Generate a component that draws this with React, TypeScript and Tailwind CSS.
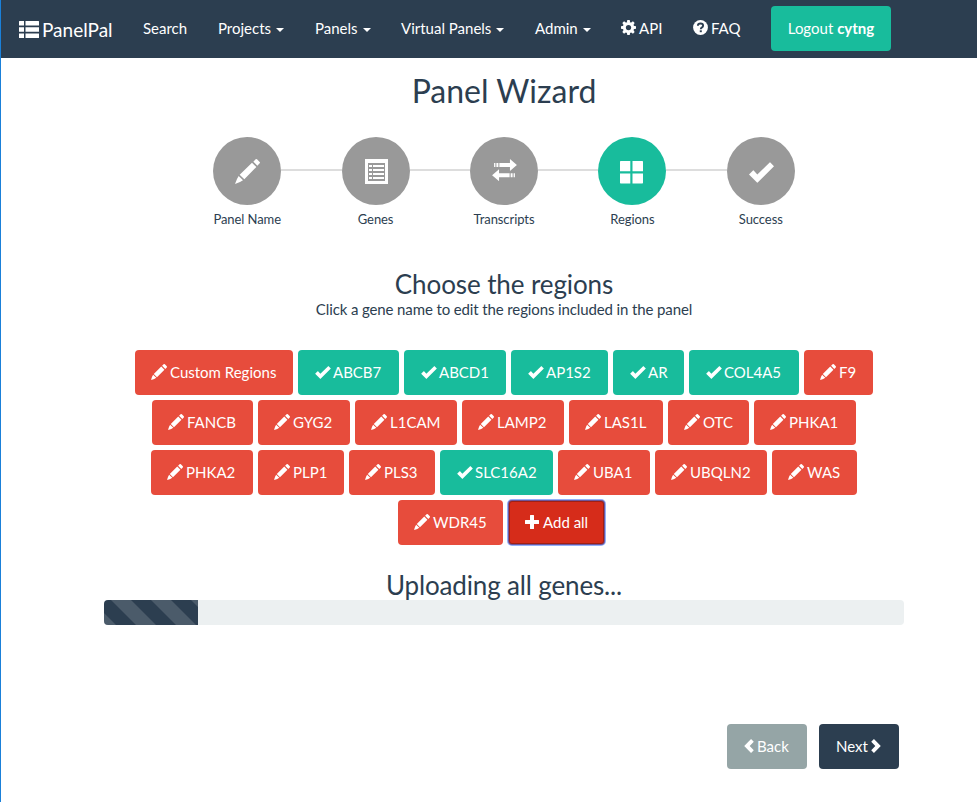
import React from "react";

type IconProps = { className?: string };

const Pencil = ({ className = "" }: IconProps) => (
  <svg viewBox="0 0 75 75" className={className} fill="currentColor">
    <path d="M55 8 62 1Q64 -1 66 1L74 9Q76 11 74 13L67 20ZM51 11 64 24 28 61 14 47ZM11 51 24 64 15 69 0 75 6 60Z" />
  </svg>
);

const SmallPencil = () => (
  <svg viewBox="0 0 75 75" className="mr-[3px] mb-0.5 -ml-px h-4 w-4 shrink-0" fill="currentColor">
    <path d="M52 8 59 1Q62 -1 65 1L74 10Q76 13 74 16L67 23ZM48 12 63 27 28 62 13 47ZM10 50 25 65 15 70 0 75 5 60Z" />
  </svg>
);

const Check = ({ className = "" }: IconProps) => (
  <svg viewBox="0 0 75 62" className={className} fill="currentColor">
    <path d="M0 37 12 25Q13 24 14 25L25 37 62 1Q63 0 64 1L75 12 26 61Q25 62 24 61Z" />
  </svg>
);

const ListBox = () => (
  <svg viewBox="0 0 23 25" className="ml-0.5 h-[25px] w-[23px]" shapeRendering="crispEdges">
    <path fill="#fff" d="M0 0h23v25H0z" />
    <path fill="#999" d="M3 4h17v18H3z" />
    <path fill="#fff" d="M4 6h3v2H4zM8 6h11v2H8zM4 10h3v2H4zM8 10h11v2H8zM4 14h3v2H4zM8 14h11v2H8zM4 18h3v2H4zM8 18h11v2H8z" />
  </svg>
);

const Transfer = () => (
  <svg viewBox="0 0 75 68" className="mb-0.5 h-[22.5px] w-[25px]" fill="currentColor">
    <path d="M6 12h4v12H6zM13 12h6v12h-6zM22 12h32V0L75 18 54 36V24H22zM69 43h-4v12h4zM62 43h-6v12h6zM53 43H21V31L0 49 21 67V55H53z" />
  </svg>
);

const Windows = () => (
  <svg viewBox="0 0 23 23" className="h-[23px] w-[23px]" fill="currentColor">
    <path d="M.7 0H10.3V10.3H0V.7Q0 0 .7 0ZM12.5 0H22.3Q23 0 23 .7V10.3H12.5ZM0 12.5H10.3V22.5H.7Q0 22.5 0 21.8ZM12.5 12.5H23V21.8Q23 22.5 22.3 22.5H12.5Z" />
  </svg>
);

const Brand = () => (
  <svg viewBox="0 0 20 17" className="h-[17px] w-5" fill="currentColor">
    <path d="M0 .5Q0 0 .5 0H5V4.5H0ZM6.5 0H19.5Q20 0 20 .5V4.5H6.5ZM0 6.2H5V10.8H0ZM6.5 6.2H20V10.8H6.5ZM0 12.5H5V17H.5Q0 17 0 16.500ZM6.500 12.500H20V16.500Q20 17 19.500 17H6.500Z" />
  </svg>
);

const Gear = () => (
  <svg viewBox="0 0 16 16" className="-mt-0.5 h-[15px] w-[15px]">
    <g fill="currentColor">
      <circle cx="8" cy="8" r="6" />
      <path d="M6.700 0h2.600l.5 3h-3.600zM6.700 16h2.600l.5-3h-3.600zM0 6.700v2.600l3 .5v-3.600zM16 6.700v2.600l-3 .5v-3.600z" />
      <path transform="rotate(45 8 8)" d="M6.700 0h2.600l.5 3h-3.600zM6.700 16h2.600l.5-3h-3.600zM0 6.700v2.600l3 .5v-3.600zM16 6.700v2.600l-3 .5v-3.600z" />
    </g>
    <circle cx="8" cy="8" r="2.800" fill="#2c3e50" />
  </svg>
);

const Question = () => (
  <svg viewBox="0 0 16 16" className="-mt-0.5 h-[15px] w-[15px]">
    <circle cx="8" cy="8" r="7.900" fill="currentColor" />
    <path d="M5.200 6.200Q5.200 3.700 8 3.700T10.800 6Q10.800 7.200 9.300 8.100 8.300 8.700 8.300 9.800" fill="none" stroke="#2c3e50" strokeWidth="2" />
    <path d="M7.200 11h2.200v2H7.200z" fill="#2c3e50" />
  </svg>
);

const Chevron = ({ className = "" }: IconProps) => (
  <svg viewBox="0 0 28 41" className={className} fill="currentColor">
    <path d="M20 0 28 8 16 20.500 28 33 20 41 0 20.500Z" />
  </svg>
);

const Plus = () => (
  <svg viewBox="0 0 14 14" className="mb-px h-[14px] w-[14px]" fill="currentColor">
    <path d="M5 .5Q5 0 5.500 0H8.500Q9 0 9 .5V5H13.500Q14 5 14 5.500V8.500Q14 9 13.500 9H9V13.500Q9 14 8.500 14H5.500Q5 14 5 13.500V9H.5Q0 9 0 8.500V5.500Q0 5 .5 5H5Z" />
  </svg>
);

const Caret = () => (
  <span className="ml-[5px] mt-[3px] border-x-4 border-t-4 border-x-transparent border-t-white" />
);

const steps = [
  { label: "Panel Name", icon: <Pencil className="h-[25px] w-[25px]" />, active: false },
  { label: "Genes", icon: <ListBox />, active: false },
  { label: "Transcripts", icon: <Transfer />, active: false },
  { label: "Regions", icon: <span className="mt-0.5 mr-px"><Windows /></span>, active: true },
  { label: "Success", icon: <span className="ml-px mt-0.5"><Check className="h-[21px] w-[25px]" /></span>, active: false },
];

type Gene = { name: string; w: number; done?: boolean };

const rows: Gene[][] = [
  [
    { name: "Custom Regions", w: 158 },
    { name: "ABCB7", w: 101, done: true },
    { name: "ABCD1", w: 102, done: true },
    { name: "AP1S2", w: 97, done: true },
    { name: "AR", w: 71, done: true },
    { name: "COL4A5", w: 110, done: true },
    { name: "F9", w: 69 },
  ],
  [
    { name: "FANCB", w: 101 },
    { name: "GYG2", w: 92 },
    { name: "L1CAM", w: 102 },
    { name: "LAMP2", w: 102 },
    { name: "LAS1L", w: 94 },
    { name: "OTC", w: 81 },
    { name: "PHKA1", w: 102 },
  ],
  [
    { name: "PHKA2", w: 102 },
    { name: "PLP1", w: 86 },
    { name: "PLS3", w: 86 },
    { name: "SLC16A2", w: 113, done: true },
    { name: "UBA1", w: 92 },
    { name: "UBQLN2", w: 112 },
    { name: "WAS", w: 85 },
  ],
  [{ name: "WDR45", w: 105 }],
];

const GeneButton = ({ name, w, done }: Gene) => (
  <button
    style={{ width: w }}
    className={`flex h-[45px] shrink-0 items-center whitespace-nowrap rounded pl-[17px] text-white ${done ? "bg-[#18bc9c]" : "bg-[#e74c3c]"}`}
  >
    {done ? (
      <Check className="mr-0.5 h-[13px] w-4 shrink-0" />
    ) : (
      <SmallPencil />
    )}
    {name}
  </button>
);

export default function App() {
  return (
    <div className="h-[802px] w-[977px] overflow-hidden border-l border-[#1a80d9] bg-white font-['Lato',sans-serif] text-[15px] leading-[21px] text-[#2c3e50]">
      <nav className="flex h-[58px] items-center whitespace-nowrap bg-[#2c3e50] pb-0.5 pl-[18px] text-white">
        <a className="flex w-[124px] items-center gap-[3px] pt-0.5 text-[19px]">
          <Brand />
          PanelPal
        </a>
        <a className="w-[75px]">Search</a>
        <a className="flex w-[97px] items-center">Projects<Caret /></a>
        <a className="flex w-[86px] items-center">Panels<Caret /></a>
        <a className="flex w-[134px] items-center">Virtual Panels<Caret /></a>
        <a className="flex w-[86px] items-center">Admin<Caret /></a>
        <a className="flex w-[72px] items-center gap-[3px]"><Gear />API</a>
        <a className="flex w-[78px] items-center gap-[3px]"><Question />FAQ</a>
        <button className="h-[45px] w-[120px] rounded bg-[#18bc9c]">
          Logout <b>cytng</b>
        </button>
      </nav>

      <main className="ml-[103px] w-[800px]">
        <h1 className="pt-[15px] text-center text-[32px] leading-[36px]">Panel Wizard</h1>

        <ol className="mt-7 flex justify-center">
          {steps.map((s, i) => (
            <li key={s.label} className="flex">
              {i > 0 && <span className="mt-8 h-0.5 w-[60.400px] bg-[#ddd]" />}
              <div className="flex w-[68px] flex-col items-center whitespace-nowrap">
                <div className={`flex h-[68px] w-[68px] items-center justify-center rounded-full text-white ${s.active ? "bg-[#18bc9c]" : "bg-[#999]"}`}>
                  {s.icon}
                </div>
                <span className="mt-[5px] text-[13px] leading-[18px] tracking-[-0.08px]">{s.label}</span>
              </div>
            </li>
          ))}
        </ol>

        <h2 className="mt-[42px] text-center text-[26px] leading-[29px] tracking-[-0.1px]">Choose the regions</h2>
        <p className="text-center tracking-[-0.12px]">Click a gene name to edit the regions included in the panel</p>

        <div className="mt-[30px] flex flex-col gap-[5px]">
          {rows.map((row, i) => (
            <div key={i} className="flex justify-center gap-[5px]">
              {row.map((g) => (
                <GeneButton key={g.name} {...g} />
              ))}
              {i === 3 && (
                <button className="mr-[5px] flex h-[45px] w-[97px] items-center gap-1 rounded border-2 border-[#a02014] bg-[#d62c1a] pl-[15px] text-white outline-2 -outline-offset-1 outline-[#4d7cf5]/60">
                  <Plus />
                  Add all
                </button>
              )}
            </div>
          ))}
        </div>

        <h2 className="mt-[26px] text-center text-[26px] leading-[29px] tracking-[-0.15px]">Uploading all genes...</h2>
        <div className="h-[25px] overflow-hidden rounded bg-[#ecf0f1]">
          <div className="h-full w-[94px] bg-[#2c3e50] bg-[linear-gradient(45deg,rgba(255,255,255,.15)_25%,transparent_25%,transparent_50%,rgba(255,255,255,.15)_50%,rgba(255,255,255,.15)_75%,transparent_75%,transparent)] bg-[length:40px_40px] bg-[position:7.500px_0]" />
        </div>

        <div className="mt-[99px] mr-[5px] flex justify-end gap-3 text-white">
          <button className="flex h-[45px] w-20 items-center gap-[3px] rounded bg-[#95a5a6] pl-[17px]">
            <Chevron className="mb-px h-[14px] w-[10px]" />
            Back
          </button>
          <button className="flex h-[45px] w-20 items-center gap-[3px] rounded bg-[#2c3e50] pl-[17px]">
            Next
            <Chevron className="mb-px h-[14px] w-[10px] rotate-180" />
          </button>
        </div>
      </main>
    </div>
  );
}
